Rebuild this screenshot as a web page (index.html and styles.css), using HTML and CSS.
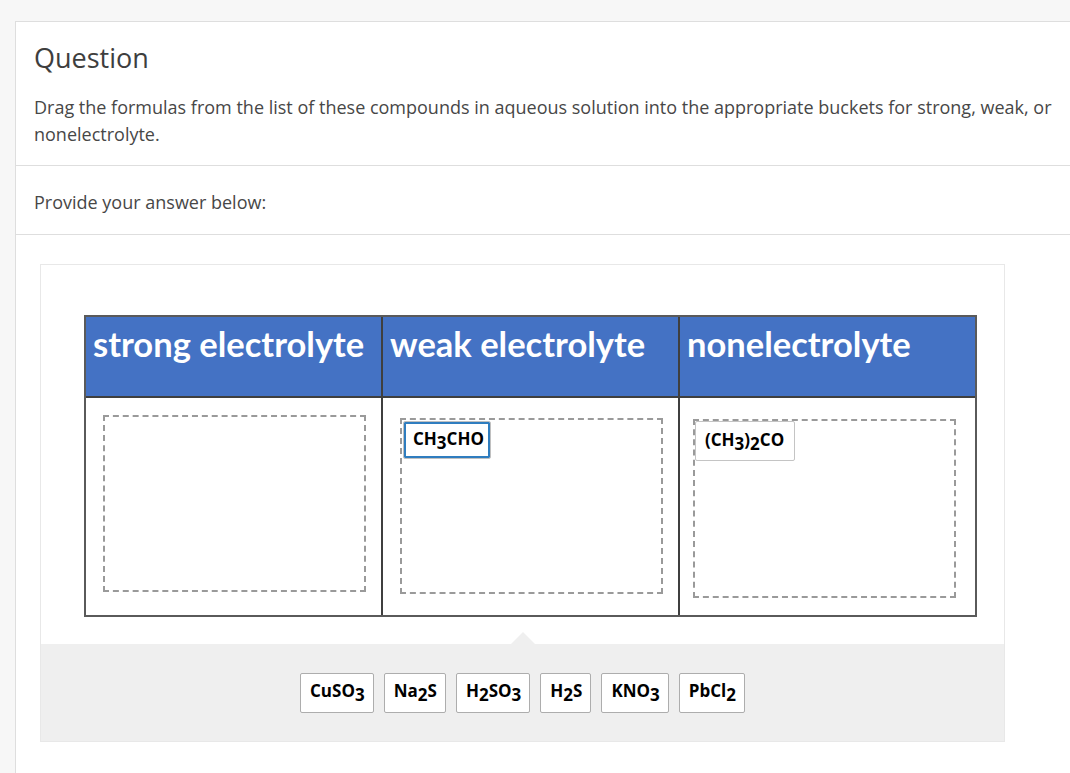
FILE: index.html
```html
<!DOCTYPE html>
<html lang="en">
<head>
<meta charset="utf-8">
<title>Question</title>
<link rel="stylesheet" href="styles.css">
</head>
<body>
<div class="card">
  <section class="sec sec-question">
    <h1 class="title">Question</h1>
    <p class="text">Drag the formulas from the list of these compounds in aqueous solution into the appropriate buckets for strong, weak, or nonelectrolyte.</p>
  </section>
  <section class="sec sec-prompt">
    <p class="text">Provide your answer below:</p>
  </section>
  <section class="sec sec-answer">
    <div class="widget">
      <div class="board">
        <div class="grid">
          <div class="head">strong electrolyte</div>
          <div class="head">weak electrolyte</div>
          <div class="head">nonelectrolyte</div>
          <div class="cell">
            <div class="zone zone-1"></div>
          </div>
          <div class="cell">
            <div class="zone zone-2">
              <div class="chip chip-focus"><span class="f">CH<sub>3</sub>CHO</span></div>
            </div>
          </div>
          <div class="cell">
            <div class="zone zone-3">
              <div class="chip"><span class="f">(CH<sub>3</sub>)<sub>2</sub>CO</span></div>
            </div>
          </div>
        </div>
      </div>
      <div class="tray">
        <div class="chip"><span class="f">CuSO<sub>3</sub></span></div>
        <div class="chip"><span class="f">Na<sub>2</sub>S</span></div>
        <div class="chip"><span class="f">H<sub>2</sub>SO<sub>3</sub></span></div>
        <div class="chip"><span class="f">H<sub>2</sub>S</span></div>
        <div class="chip"><span class="f">KNO<sub>3</sub></span></div>
        <div class="chip"><span class="f">PbCl<sub>2</sub></span></div>
      </div>
    </div>
  </section>
</div>
</body>
</html>
```

FILE: styles.css
```css
html, body {
  margin: 0;
  padding: 0;
  overflow: hidden;
}
body {
  background: #f7f7f7;
  font-family: "Open Sans", "Noto Sans", sans-serif;
  color: #444;
  height: 773px;
}
.card {
  margin: 21px 0 0 15px;
  width: 1085px;
  background: #fff;
  border: 1px solid #dedede;
  border-right: none;
  border-bottom: none;
  min-height: 760px;
  box-sizing: border-box;
}
.sec {
  border-bottom: 1px solid #dedede;
  padding: 18px 14px 17px 18px;
}
.sec-prompt {
  padding-top: 23px;
  padding-bottom: 18px;
}
.sec-answer {
  border-bottom: none;
  padding: 29px 0 0 24px;
}
.title {
  margin: 0 0 18px;
  font-size: 27px;
  line-height: 36px;
  font-weight: 500;
  color: #3e3e3e;
}
.text {
  margin: 0;
  font-size: 18px;
  line-height: 27px;
  color: #474747;
}
.widget {
  width: 965px;
  border: 1px solid #e8e8e8;
  box-sizing: border-box;
  background: #fff;
}
.board {
  padding: 50px 0 27px 43px;
}
.grid {
  display: grid;
  grid-template-columns: 295px 295px 295px;
  grid-template-rows: 79px 217px;
  gap: 2px;
  width: 893px;
  box-sizing: border-box;
  background: #3f3f3f;
  border: 2px solid #5a5a5a;
}
.head {
  background: #4472c4;
  color: #fff;
  font-family: Lato, "Open Sans", sans-serif;
  font-weight: 700;
  font-size: 34.5px;
  line-height: 38px;
  padding: 8px 0 0 7px;
  white-space: nowrap;
}
.cell {
  background: #fff;
}
.zone {
  box-sizing: border-box;
  width: 263px;
  border: 2px dashed #9a9a9a;
  padding: 0;
}
.zone-1 {
  margin: 17px 0 0 17px;
  height: 177px;
}
.zone-2 {
  margin: 20px 0 0 17px;
  height: 176px;
  padding: 1px;
}
.zone-3 {
  margin: 21px 0 0 13px;
  height: 179px;
}
.zone .chip {
  display: inline-flex;
}
.chip {
  display: flex;
  align-items: center;
  height: 40px;
  box-sizing: border-box;
  padding: 0 8px 3px 9px;
  background: #fff;
  border: 1px solid #adadad;
  border-radius: 2px;
  font-family: "Open Sans", sans-serif;
  font-weight: 700;
  font-size: 17px;
  color: #000;
  white-space: nowrap;
}
.f {
  display: inline-block;
  line-height: 20px;
}
.zone-2 .chip {
  height: 38px;
  width: 88px;
  padding-left: 9px;
}
.zone-3 .chip {
  width: 100px;
  border-color: #c4c4c4;
}
.chip-focus {
  border-color: #c0c0c0;
  box-shadow: inset 0 0 0 2px #2f7dbf;
}
.chip sub {
  font-size: 100%;
  vertical-align: -4px;
  line-height: 0;
}
.tray {
  position: relative;
  background: #efefef;
  height: 97px;
  display: flex;
  justify-content: center;
  align-items: center;
  gap: 10px;
}
.tray::before {
  content: "";
  position: absolute;
  top: -12px;
  left: 50%;
  margin-left: -12px;
  border-left: 12px solid transparent;
  border-right: 12px solid transparent;
  border-bottom: 12px solid #efefef;
}
```
